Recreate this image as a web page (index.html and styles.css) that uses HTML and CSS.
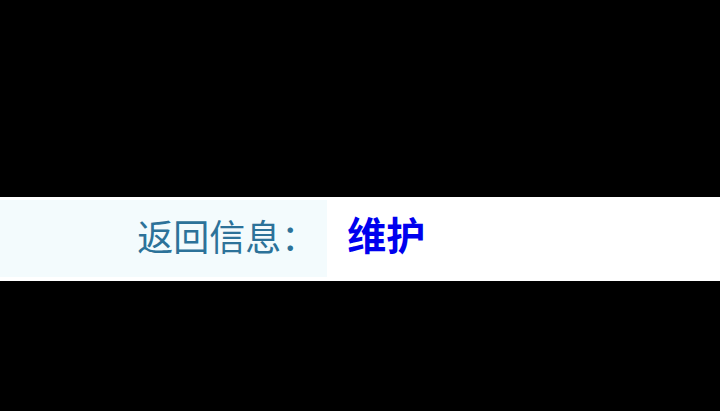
FILE: index.html
```html
<!DOCTYPE html>
<html lang="zh-CN">
<head>
<meta charset="utf-8">
<title>返回信息</title>
<link rel="stylesheet" href="styles.css">
</head>
<body>
<main class="page">
<dl class="row">
<dt class="label">返回信息：</dt>
<dd class="value">维护</dd>
</dl>
</main>
</body>
</html>
```
FILE: styles.css
```css
body {
  margin: 0;
  background: #000;
  font-family: "Liberation Sans", "Noto Sans CJK SC", sans-serif;
}

.page {
  padding: 197px 0 130px;
}

.row {
  display: grid;
  grid-template-columns: 5fr 6fr;
  margin: 0;
  background: #fff;
  font-size: 36px;
  line-height: 80px;
}

.label {
  margin: 3px 0 4px;
  padding-right: 10px;
  background: #f3fbfd;
  color: #2c7299;
  line-height: 77px;
  text-align: right;
}

.value {
  margin: 0;
  padding-left: 20px;
  color: #00e;
  font-size: 39px;
  font-weight: 700;
}
```
